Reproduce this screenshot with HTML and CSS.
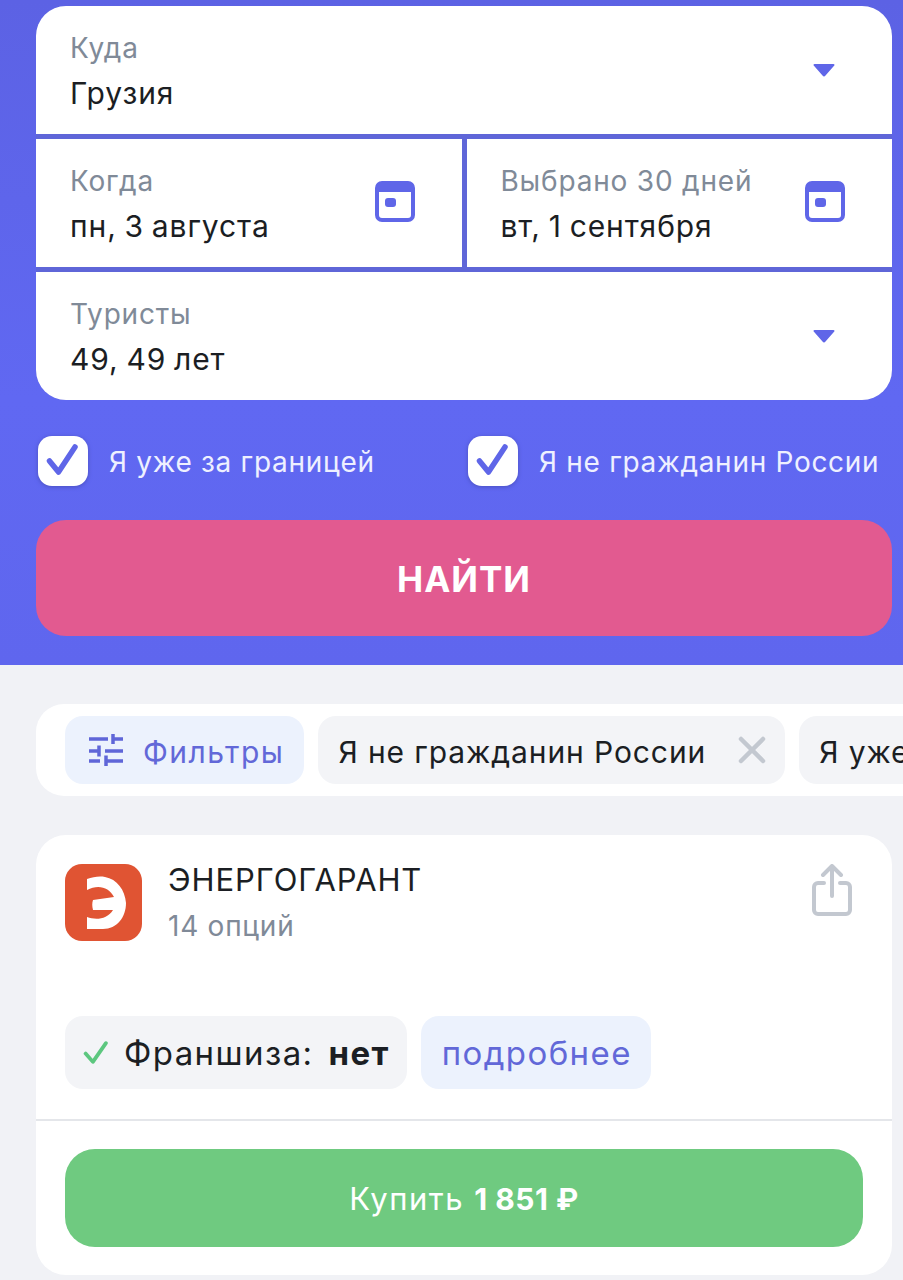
FILE: index.html
```html
<!DOCTYPE html>
<html lang="ru">
<head>
    <meta charset="UTF-8">
    <meta name="viewport" content="width=device-width, initial-scale=1.0">
    <title>Страховка</title>
    <link rel="stylesheet" href="styles.css">
</head>
<body>
    <div class="hero">
        <div class="form">
            <div class="field">
                <div class="field_text">
                    <span class="label">Куда</span>
                    <span class="value">Грузия</span>
                </div>
                <svg class="arrow" viewBox="0 0 24 14"><path d="M2.500 1h19a1 1 0 0 1 .8 1.600l-8.800 10a2 2 0 0 1-3 0L1.700 2.600A1 1 0 0 1 2.500 1z"/></svg>
            </div>
            <div class="dates">
                <div class="field">
                    <div class="field_text">
                        <span class="label">Когда</span>
                        <span class="value">пн, 3 августа</span>
                    </div>
                    <svg class="calendar" viewBox="0 0 40 41"><rect x="2" y="2" width="36" height="37" rx="5" fill="none" stroke="#5f66e8" stroke-width="4"/><rect x="2" y="2" width="36" height="9" fill="#5f66e8"/><rect x="10" y="17" width="11" height="9" rx="3" fill="#5f66e8"/></svg>
                </div>
                <div class="field">
                    <div class="field_text">
                        <span class="label">Выбрано 30 дней</span>
                        <span class="value">вт, 1 сентября</span>
                    </div>
                    <svg class="calendar" viewBox="0 0 40 41"><rect x="2" y="2" width="36" height="37" rx="5" fill="none" stroke="#5f66e8" stroke-width="4"/><rect x="2" y="2" width="36" height="9" fill="#5f66e8"/><rect x="10" y="17" width="11" height="9" rx="3" fill="#5f66e8"/></svg>
                </div>
            </div>
            <div class="field">
                <div class="field_text">
                    <span class="label">Туристы</span>
                    <span class="value">49, 49 лет</span>
                </div>
                <svg class="arrow" viewBox="0 0 24 14"><path d="M2.500 1h19a1 1 0 0 1 .8 1.600l-8.800 10a2 2 0 0 1-3 0L1.700 2.600A1 1 0 0 1 2.500 1z"/></svg>
            </div>
        </div>

        <div class="checks">
            <div class="check check_first">
                <div class="check_box"><svg viewBox="0 0 50 50"><path d="M11.500 25l9 11L37 11" fill="none" stroke="#5f66e8" stroke-width="5.500" stroke-linecap="round" stroke-linejoin="round"/></svg></div>
                <span>Я уже за границей</span>
            </div>
            <div class="check">
                <div class="check_box"><svg viewBox="0 0 50 50"><path d="M11.500 25l9 11L37 11" fill="none" stroke="#5f66e8" stroke-width="5.500" stroke-linecap="round" stroke-linejoin="round"/></svg></div>
                <span>Я не гражданин России</span>
            </div>
        </div>

        <button class="find">НАЙТИ</button>
    </div>

    <div class="filters">
        <div class="chip chip_blue filter_chip">
            <svg class="filter_icon" viewBox="0 0 34 32" fill="none" stroke="#5f66d8" stroke-width="3.500">
                <path d="M0 5h19M24 5h10M24 0v10M0 17h9M10 11.500v11M16 17h18M0 27h11M17 27h17M17 21.500v10.500"/>
            </svg>
            <span>Фильтры</span>
        </div>
        <div class="chip tag">
            <span>Я не гражданин России</span>
            <svg class="close" viewBox="0 0 28 28"><path d="M3 3l22 22M25 3L3 25" stroke="#c3c8d0" stroke-width="4.500" stroke-linecap="round"/></svg>
        </div>
        <div class="chip tag"><span>Я уже за границей</span></div>
    </div>

    <div class="card">
        <div class="card_head">
            <svg class="logo" viewBox="0 0 77 77">
                <rect width="77" height="77" rx="17" fill="#e05433"/>
                <path d="M22 15C28 13 34 12 40 13C52 15 60 26 61 39C61 53 52 65 38 65L22 65L22 53C30 56 42 56 48 46L28 46C27 42 27 39 28 36L49 33C44 23 33 20 22 26Z" fill="#fff"/>
            </svg>
            <div class="company">
                <div class="company_name">ЭНЕРГОГАРАНТ</div>
                <div class="company_options">14 опций</div>
            </div>
            <svg class="share" viewBox="0 0 40 52" fill="none" stroke="#c3c8d0" stroke-width="4" stroke-linecap="round" stroke-linejoin="round">
                <path d="M20 32V3M11 11l9-9 9 9"/>
                <path d="M12 19H6a4 4 0 0 0-4 4v23a4 4 0 0 0 4 4h28a4 4 0 0 0 4-4V23a4 4 0 0 0-4-4h-6"/>
            </svg>
        </div>

        <div class="info">
            <div class="chip franchise">
                <svg class="tick" viewBox="0 0 24 24"><path d="M2.500 13l7 8L22 3" fill="none" stroke="#5cc77f" stroke-width="3.600" stroke-linecap="round" stroke-linejoin="round"/></svg>
                <span>Франшиза:</span>
                <b>нет</b>
            </div>
            <div class="chip chip_blue more">подробнее</div>
        </div>

        <div class="card_foot">
            <button class="buy">Купить <b>1 851 ₽</b></button>
        </div>
    </div>
</body>
</html>
```

FILE: styles.css
```css
*{
    margin: 0;
    padding: 0;
    box-sizing: border-box;

    font-family: Inter, "Noto Sans", sans-serif;
}

body{
    height: 1280px;
    overflow: hidden;
    background-color: #f1f2f6;
    color: #1b1e23;
}

.hero{
    height: 665px;
    padding: 6px 11px 0 36px;
    background: linear-gradient(#5c62e4, #6068f2 60%, #5f66ee);
}

.form{
    display: flex;
    flex-direction: column;
    gap: 5px;
    height: 394px;
    border-radius: 30px;
    overflow: hidden;
    background-color: #5f66d8;
}

.field{
    flex: 1;
    display: flex;
    align-items: center;
    justify-content: space-between;
    padding: 0 35px 0 34px;
    background-color: white;
}

.field_text{
    display: flex;
    flex-direction: column;
    gap: 11px;
}

.label{
    font-size: 28px;
    line-height: 34px;
    letter-spacing: 0.8px;
    color: #808a98;
}

.value{
    font-size: 30px;
    line-height: 34px;
    letter-spacing: 0.9px;
    word-spacing: -1.5px;
}

.arrow{
    width: 24px;
    height: 14px;
    margin-right: 21px;
    fill: #5f66e8;
}

.dates{
    flex: 1;
    display: flex;
    gap: 5px;
}

.dates .field{
    padding-right: 47px;
}

.calendar{
    width: 40px;
    height: 41px;
    margin-bottom: 4px;
}

.checks{
    display: flex;
    margin-top: 36px;
    padding-left: 2px;
}

.check{
    display: flex;
    align-items: center;
    gap: 21px;
    color: #eef0ff;
    font-size: 28px;
    letter-spacing: 0.7px;
    white-space: nowrap;

    span{
        padding-top: 2px;
    }
}

.check_first{
    width: 430px;
}

.check_box{
    width: 50px;
    height: 50px;
    border-radius: 14px;
    background-color: white;
    box-shadow: 0 1px 4px #4a50c0;

    svg{
        display: block;
        width: 50px;
        height: 50px;
    }
}

.find{
    display: block;
    width: 100%;
    height: 116px;
    margin-top: 34px;
    padding-top: 2px;
    border: none;
    border-radius: 30px;
    background-color: #e25a90;
    color: white;
    font-size: 35px;
    font-weight: 700;
    letter-spacing: 1px;
}

.filters{
    display: flex;
    gap: 14px;
    height: 92px;
    margin: 39px 0 0 36px;
    padding: 12px 0 12px 29px;
    border-radius: 28px 0 0 28px;
    background-color: white;
    overflow: hidden;

    span{
        padding-top: 3px;
    }
}

.chip{
    flex-shrink: 0;
    display: flex;
    align-items: center;
    padding: 0 20px;
    border-radius: 18px;
    background-color: #f3f4f7;
    font-size: 30px;
    letter-spacing: 0.9px;
    white-space: nowrap;
}

.tag{
    padding-right: 19px;
}

.chip_blue{
    background-color: #ecf2fd;
    color: #6268d8;
}

.filter_chip{
    letter-spacing: 1.500px;
}

.filter_icon{
    width: 34px;
    height: 32px;
    margin: 0 20px 0 4px;
}

.close{
    width: 28px;
    height: 28px;
    margin-left: 32px;
}

.card{
    width: 856px;
    height: 440px;
    margin: 39px 0 0 36px;
    border-radius: 30px;
    background-color: white;
}

.card_head{
    display: flex;
    height: 181px;
    padding: 29px 40px 0 29px;
}

.logo{
    width: 77px;
    height: 77px;
}

.company{
    flex: 1;
    margin-left: 26px;
}

.company_name{
    font-size: 31px;
    line-height: 34px;
    letter-spacing: 0.9px;
    margin-top: -1px;
}

.company_options{
    margin-top: 12px;
    font-size: 28px;
    line-height: 34px;
    letter-spacing: 0.75px;
    color: #808a98;
}

.share{
    width: 40px;
    height: 52px;
}

.info{
    display: flex;
    gap: 14px;
    height: 105px;
    padding: 0 29px 30px;
    border-bottom: 2px solid #e4e6ea;

    .chip{
        padding-top: 2px;
        font-size: 33px;
        letter-spacing: 1.400px;
    }
}

.info .franchise{
    padding: 0 17px 0 18px;

    b{
        margin-left: 15px;
    }
}

.tick{
    width: 25px;
    height: 25px;
    margin-right: 16px;
}

.info .more{
    padding: 0 19px 0 21px;
}

.card_foot{
    padding: 28px 29px 0;
}

.buy{
    display: block;
    width: 100%;
    height: 98px;
    border: none;
    border-radius: 30px;
    background-color: #6fca80;
    color: white;
    font-size: 31px;
    letter-spacing: 1.500px;

    b{
        font-size: 30px;
        font-weight: 700;
        letter-spacing: 0.500px;
    }
}
```
